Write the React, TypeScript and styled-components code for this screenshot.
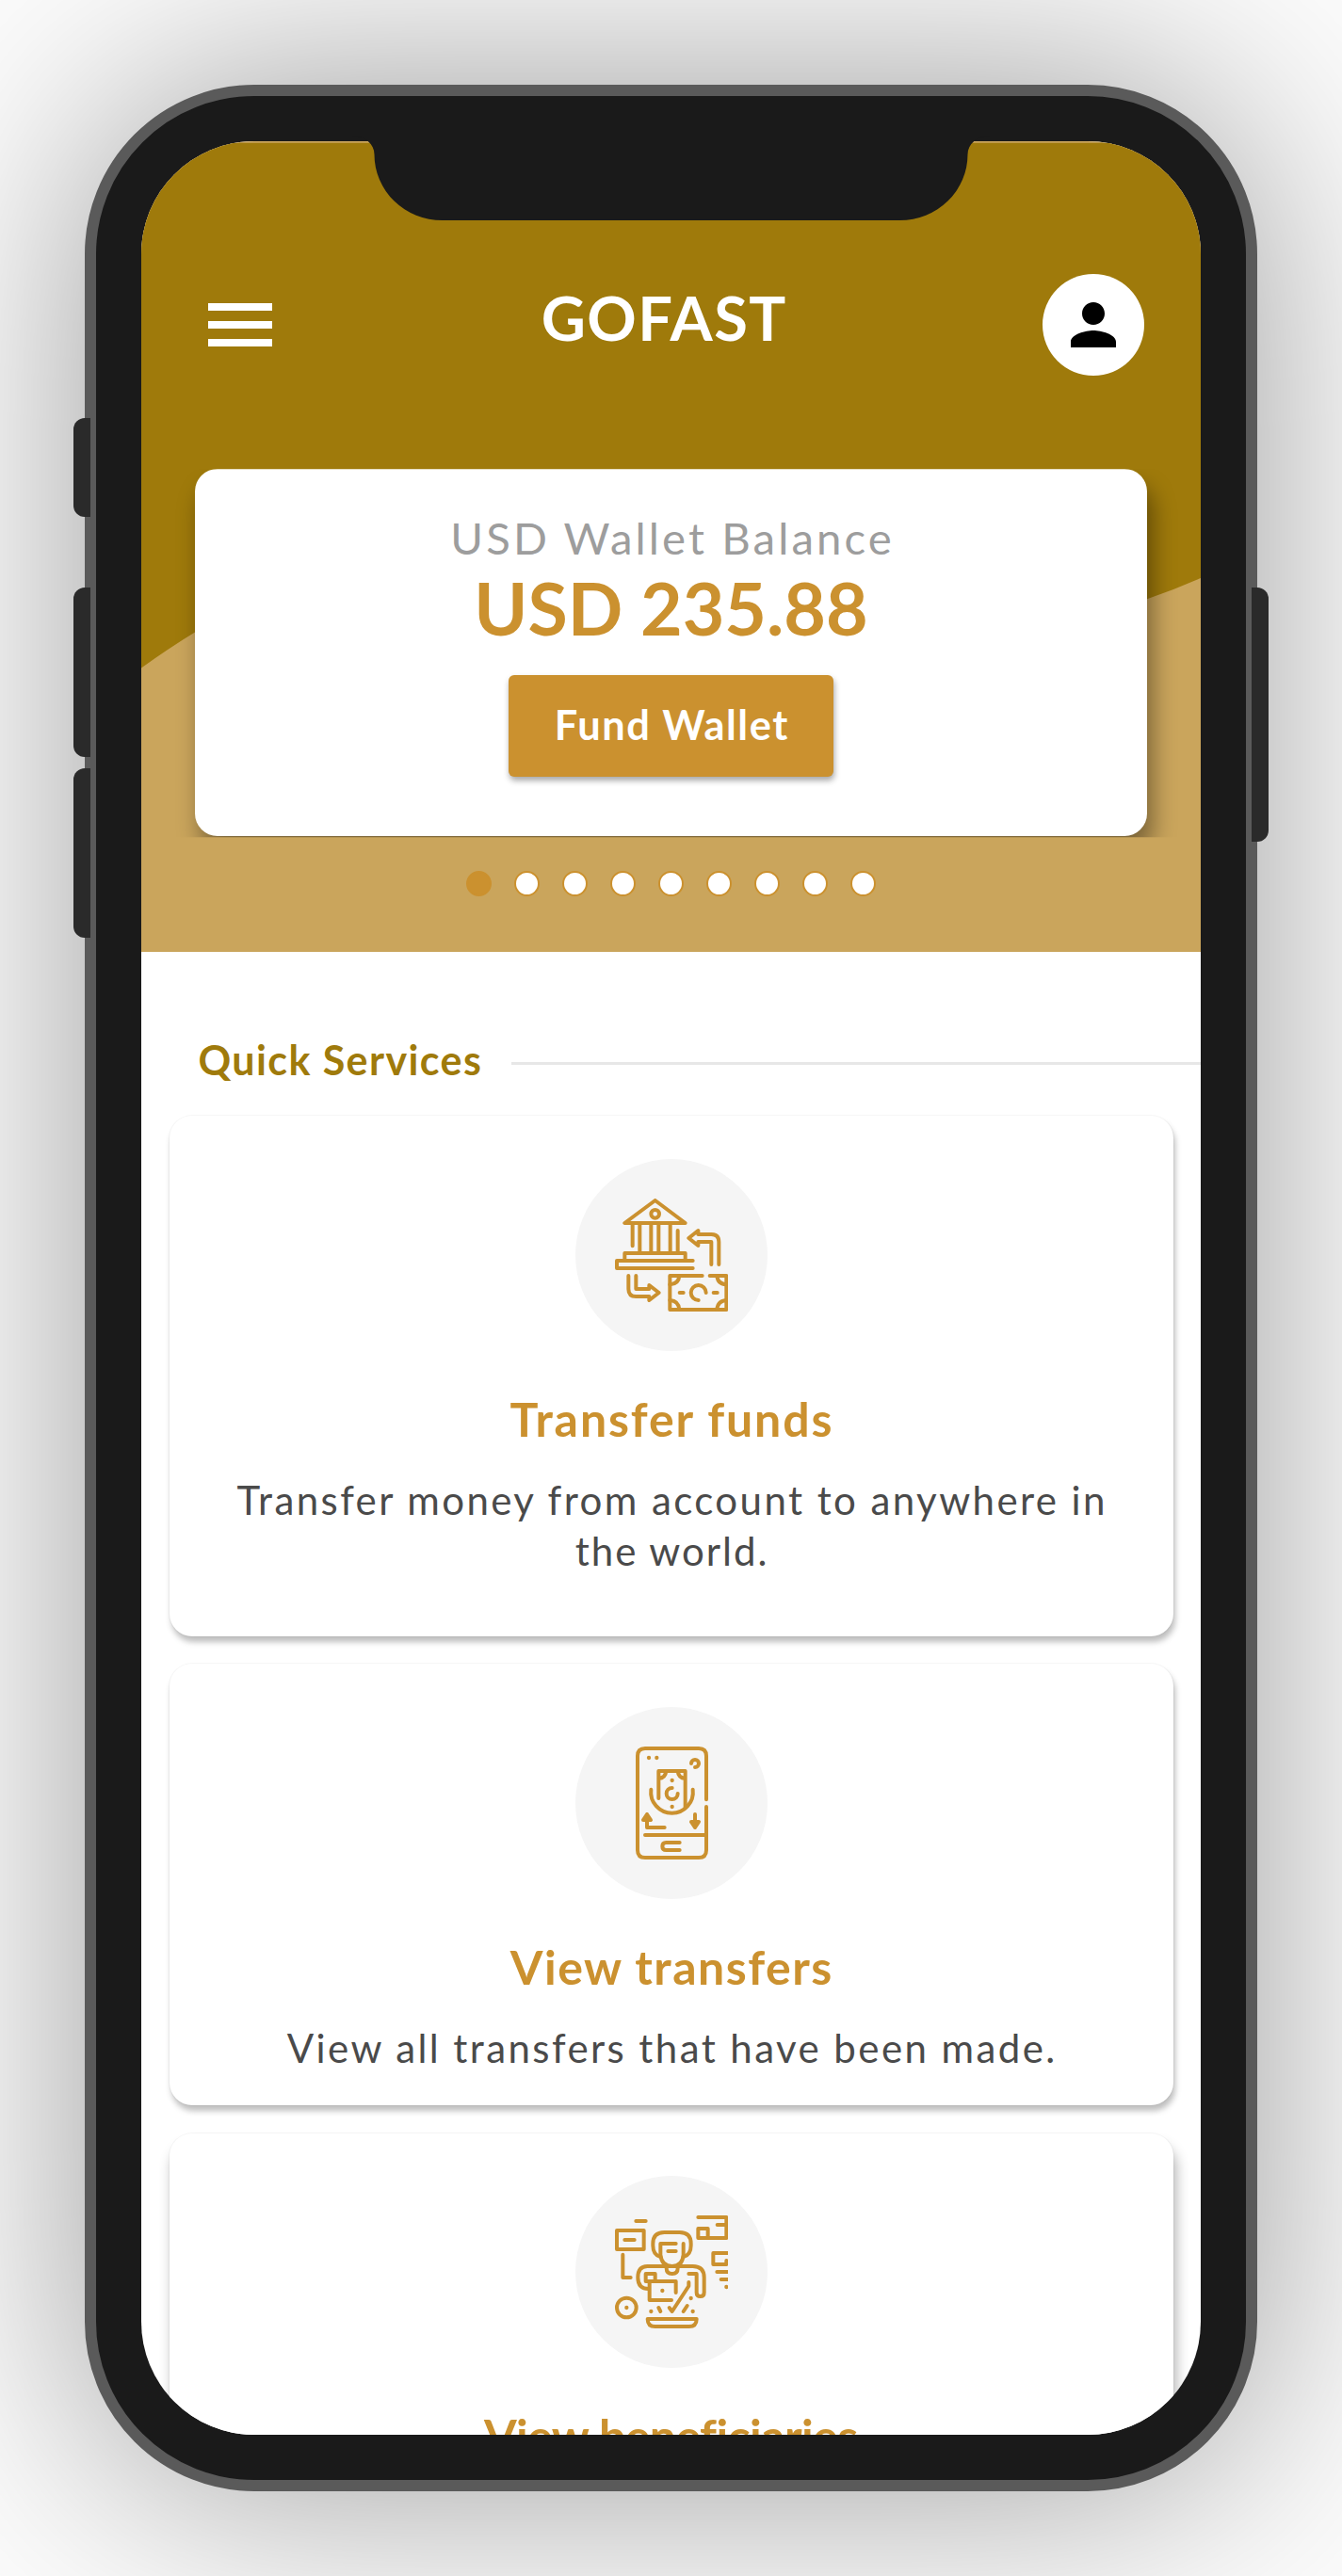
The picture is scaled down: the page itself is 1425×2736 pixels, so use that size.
import React from 'react';
import styled, { createGlobalStyle } from 'styled-components';

const olive = '#9f7a0b';
const amber = '#cb912f';
const tan = '#caa55c';

const GlobalStyle = createGlobalStyle`
  *, *::before, *::after { box-sizing: border-box; }
  body {
    margin: 0;
    background: #fcfcfc;
    font-family: Lato, "Open Sans", sans-serif;
    overflow: hidden;
  }
  h1, h2, h3, p { margin: 0; }
`;

const Stage = styled.main`
  width: 1425px;
  height: 2736px;
  padding: 90px;
  overflow: hidden;
`;

const Device = styled.div`
  position: relative;
  width: 1245px;
  height: 2556px;
  padding: 48px;
  border: 12px solid #5a5a5a;
  border-radius: 180px;
  background: #1a1a1a;
  box-shadow: 0 0 240px rgba(0, 0, 0, 0.39);
`;

const SideKey = styled.span<{ $side: 'left' | 'right'; $top: number; $length: number }>`
  position: absolute;
  ${p => p.$side}: -24px;
  top: ${p => p.$top}px;
  width: 18px;
  height: ${p => p.$length}px;
  background: #2a2a2a;
  border-radius: ${p => (p.$side === 'left' ? '12px 0 0 12px' : '0 12px 12px 0')};
`;

const NotchShape = styled.svg`
  position: absolute;
  top: 42px;
  left: 271px;
  width: 679px;
  height: 90px;
`;

const Screen = styled.div`
  width: 1125px;
  height: 2436px;
  border-radius: 120px;
  overflow: hidden;
  background: #fff;
`;

const Header = styled.header`
  position: relative;
  height: 861.4px;
  background: ${tan};
  padding-top: 141px;
`;

const Wave = styled.svg`
  position: absolute;
  inset: 0;
  width: 1125px;
  height: 861px;
`;

const TopBar = styled.div`
  position: relative;
  display: grid;
  grid-template-columns: 68px 1fr 108px;
  align-items: center;
  height: 108px;
  padding: 0 60px 0 71px;
`;

const Burger = styled.div`
  display: flex;
  flex-direction: column;
  gap: 11px;
`;

const BurgerBar = styled.span`
  height: 8px;
  background: #fff;
`;

const Brand = styled.h1`
  color: #fff;
  text-align: center;
  font-size: 65px;
  line-height: 78px;
  font-weight: 700;
  padding: 0 0 16px 13px;
`;

const Avatar = styled.div`
  display: flex;
  align-items: center;
  justify-content: center;
  width: 108px;
  height: 108px;
  border-radius: 50%;
  background: #fff;
`;

const Slide = styled.div`
  position: relative;
  margin-top: 99.3px;
  padding: 0 57px;
  clip-path: inset(0 0 -1px 0);
`;

const WalletCard = styled.section`
  display: flex;
  flex-direction: column;
  align-items: center;
  height: 390px;
  padding-top: 44px;
  border-radius: 24px;
  background: #fff;
  box-shadow: 6px 18px 24px rgba(0, 0, 0, 0.4);
`;

const Fit = styled.span<{ $track?: number }>`
  letter-spacing: ${p => p.$track ?? 0}px;
  margin-right: ${p => -(p.$track ?? 0)}px;
`;

const WalletLabel = styled.p`
  color: #9d9d9d;
  font-size: 47.3px;
  line-height: 57px;
  white-space: nowrap;
`;

const Balance = styled.p`
  padding-top: 1px;
  color: ${amber};
  font-size: 77px;
  line-height: 91px;
  font-weight: 700;
  white-space: nowrap;
`;

const FundButton = styled.button`
  width: 345px;
  height: 108px;
  margin-top: 26px;
  padding: 0 0 5px;
  border: 0;
  border-radius: 6px;
  background: ${amber};
  color: #fff;
  font: 700 43.3px/54px Lato, sans-serif;
  box-shadow: 1px 4px 6px rgba(0, 0, 0, 0.35);
`;

const Dots = styled.div`
  position: relative;
  display: flex;
  justify-content: center;
  gap: 24px;
  margin-top: 36.3px;
`;

const Dot = styled.span<{ $active: boolean }>`
  width: 27px;
  height: 27px;
  border-radius: 50%;
  border: 2.6px solid ${amber};
  background: ${p => (p.$active ? amber : '#fff')};
`;

const SectionHead = styled.div`
  display: flex;
  align-items: center;
  gap: 32px;
  padding: 87.7px 0 0 60.5px;
`;

const SectionTitle = styled.h2`
  padding-top: 1px;
  margin-bottom: -1px;
  color: ${olive};
  font-size: 43px;
  line-height: 52px;
  font-weight: 700;
  white-space: nowrap;
`;

const Rule = styled.span`
  flex: 1;
  height: 3px;
  margin-top: 8px;
  background: #e7e7e7;
`;

const ServiceList = styled.div`
  display: flex;
  flex-direction: column;
  gap: 29.6px;
  padding: 34.2px 29.5px 0;
`;

const ServiceCard = styled.article<{ $height: number; $raised?: boolean }>`
  flex: none;
  display: flex;
  flex-direction: column;
  align-items: center;
  height: ${p => p.$height}px;
  padding: 45.7px 60px 0;
  border-radius: 24px;
  background: #fff;
  box-shadow: ${p => (p.$raised
    ? '3px 12px 14px rgba(0, 0, 0, 0.3)'
    : '2px 6px 6px rgba(0, 0, 0, 0.26)')}, 0 0 0 1px rgba(0, 0, 0, 0.03);
`;

const IconDisc = styled.div`
  display: flex;
  align-items: center;
  justify-content: center;
  width: 204px;
  height: 204px;
  border-radius: 50%;
  background: #f5f5f5;
`;

const ServiceName = styled.h3`
  margin-top: 41.7px;
  color: ${amber};
  font-size: 50px;
  line-height: 60px;
  font-weight: 700;
  white-space: nowrap;
`;

const ServiceText = styled.p`
  margin-top: 29px;
  color: #4a4a4a;
  font-size: 42px;
  line-height: 54px;
  text-align: center;
  white-space: pre;
`;

const LineArt = styled.svg`
  width: 120px;
  height: 120px;
  fill: none;
  stroke: ${amber};
  stroke-width: 12;
  stroke-linecap: round;
  stroke-linejoin: round;
`;

const Speck = ({ x, y }: { x: number; y: number }) => (
  <circle cx={x} cy={y} r={6.5} fill={amber} stroke="none" />
);

const BankIcon = () => (
  <LineArt viewBox="156 159 360 360">
    <path d="M284 165L187 237H380Z" />
    <circle cx="284" cy="208" r="13" />
    <path d="M212 237V310M235 237V333M271 237V333M295 237V333M332 237V333M356 261V333" />
    <path d="M187 357V333H380V357M404 357H162V381H404" />
    <path d="M463 369V297H421V309L391 285L421 261V273H463Q487 273 487 297V369" />
    <path d="M223 405V447H265V435L296 459L265 483V471H223Q199 471 199 447V405" />
    <path d="M434 405H331V513H511V405H458" />
    <path d="M331 433Q359 431 361 405M481 405Q483 431 511 433M331 483Q359 485 361 513M481 513Q483 485 511 483" />
    <path d="M362 459H374M470 459H482M446 459A24 24 0 1 0 422 483" />
  </LineArt>
);

const PhoneIcon = () => (
  <LineArt viewBox="156 165 360 360">
    <path d="M447 334V195Q447 171 423 171H252Q228 171 228 195V495Q228 519 252 519H423Q447 519 447 495V357" />
    <path d="M399 219A12 12 0 1 1 411 231" />
    <path d="M295 330V243H380V360M319 243Q317 265 295 267M356 243Q358 265 380 267" />
    <path d="M338 297A18 18 0 1 0 356 315M271 302A67 67 0 1 0 404 302" />
    <path d="M314 423H258V381M246 399L258 381L270 399Z" />
    <path d="M411 381V423M399 405L411 423L423 405Z" />
    <path d="M252 447H447M362 471H319Q307 471 307 483Q307 495 319 495H362" />
    <Speck x={264} y={201} />
    <Speck x={289} y={201} />
    <Speck x={338} y={273} />
    <Speck x={338} y={357} />
  </LineArt>
);

const PersonIcon = () => (
  <LineArt viewBox="156 159 360 360">
    <path d="M223 177H254M162 207H248V267H162ZM187 237H218M181 284V357H206" />
    <circle cx="193" cy="453" r="31" />
    <path d="M421 165H511V231H421V201H452V231M482 189H511" />
    <path d="M520 279H469V315H511V303M481 339H520M494 363H520" />
    <path d="M301 291Q277 285 277 255V249Q277 213 313 213H362Q398 213 398 249V255Q398 285 374 291" />
    <path d="M350 249H301V285Q305 321 338 321Q371 321 374 285V249M325 273H350" />
    <path d="M320 321V327Q320 345 338 345Q356 345 356 327V321" />
    <path d="M264 393Q229 393 229 357Q229 321 259 321H404Q440 321 440 357V405Q440 417 428 417Q416 417 416 405V345H391" />
    <path d="M254 369V345H284V369M254 369H350V405M266 369V429H336" />
    <path d="M391 372V384L338 465L329 453M295 453L301 465M386 447L374 465" />
    <path d="M260 489H416Q416 513 392 513H284Q260 513 260 489Z" />
    <Speck x={193} y={453} />
    <Speck x={511} y={387} />
    <Speck x={307} y={399} />
    <Speck x={398} y={423} />
    <Speck x={271} y={465} />
    <Speck x={404} y={465} />
  </LineArt>
);

const services = [
  {
    name: 'Transfer funds',
    nameTrack: 1.9,
    lines: [
      { text: 'Transfer money from account to anywhere in', track: 2.42 },
      { text: 'the world.', track: 2 },
    ],
    height: 552.4,
    raised: false,
    Icon: BankIcon,
  },
  {
    name: 'View transfers',
    nameTrack: 1.5,
    lines: [{ text: 'View all transfers that have been made.', track: 2.42 }],
    height: 468.7,
    raised: false,
    Icon: PhoneIcon,
  },
  {
    name: 'View beneficiaries',
    nameTrack: -0.6,
    lines: [],
    height: 468.7,
    raised: true,
    Icon: PersonIcon,
  },
];

export default function App() {
  return (
    <>
      <GlobalStyle />
      <Stage>
        <Device>
          <SideKey $side="left" $top={342} $length={105} />
          <SideKey $side="left" $top={522} $length={180} />
          <SideKey $side="left" $top={714} $length={180} />
          <SideKey $side="right" $top={522} $length={270} />
          <Screen>
            <Header>
              <Wave viewBox="0 0 1125 861">
                <path
                  fill={olive}
                  d="M0 1.8H1125V464Q1097 476.5 1068 486.3C850 560 700 420 500 420C300 420 150 465 57 521.4Q29 538.5 0 559.4Z"
                />
              </Wave>
              <TopBar>
                <Burger>
                  <BurgerBar />
                  <BurgerBar />
                  <BurgerBar />
                </Burger>
                <Brand><Fit $track={1.4}>GOFAST</Fit></Brand>
                <Avatar>
                  <svg width="72" height="72" viewBox="0 0 24 24">
                    <path d="M12 12c2.21 0 4-1.79 4-4s-1.79-4-4-4-4 1.79-4 4 1.79 4 4 4zm0 2c-2.67 0-8 1.34-8 4v2h16v-2c0-2.66-5.33-4-8-4z" />
                  </svg>
                </Avatar>
              </TopBar>
              <Slide>
                <WalletCard>
                  <WalletLabel><Fit $track={3.1}>USD Wallet Balance</Fit></WalletLabel>
                  <Balance><Fit>USD 235.88</Fit></Balance>
                  <FundButton><Fit $track={1.55}>Fund Wallet</Fit></FundButton>
                </WalletCard>
              </Slide>
              <Dots>
                {Array.from({ length: 9 }, (_, i) => (
                  <Dot key={i} $active={i === 0} />
                ))}
              </Dots>
            </Header>
            <SectionHead>
              <SectionTitle><Fit $track={1.4}>Quick Services</Fit></SectionTitle>
              <Rule />
            </SectionHead>
            <ServiceList>
              {services.map(({ name, nameTrack, lines, height, raised, Icon }) => (
                <ServiceCard key={name} $height={height} $raised={raised}>
                  <IconDisc><Icon /></IconDisc>
                  <ServiceName><Fit $track={nameTrack}>{name}</Fit></ServiceName>
                  {lines.length > 0 && (
                    <ServiceText>
                      {lines.map((line, i) => (
                        <React.Fragment key={line.text}>
                          {i > 0 && <br />}
                          <Fit $track={line.track}>{line.text}</Fit>
                        </React.Fragment>
                      ))}
                    </ServiceText>
                  )}
                </ServiceCard>
              ))}
            </ServiceList>
          </Screen>
          <NotchShape viewBox="0 0 679 90">
            <path
              fill="#1a1a1a"
              d="M0.5 0A24 20 0 0 1 24.5 20A72 70 0 0 0 96.5 90H582.5A72 70 0 0 0 654.5 20A24 20 0 0 1 678.5 0Z"
            />
          </NotchShape>
        </Device>
      </Stage>
    </>
  );
}
